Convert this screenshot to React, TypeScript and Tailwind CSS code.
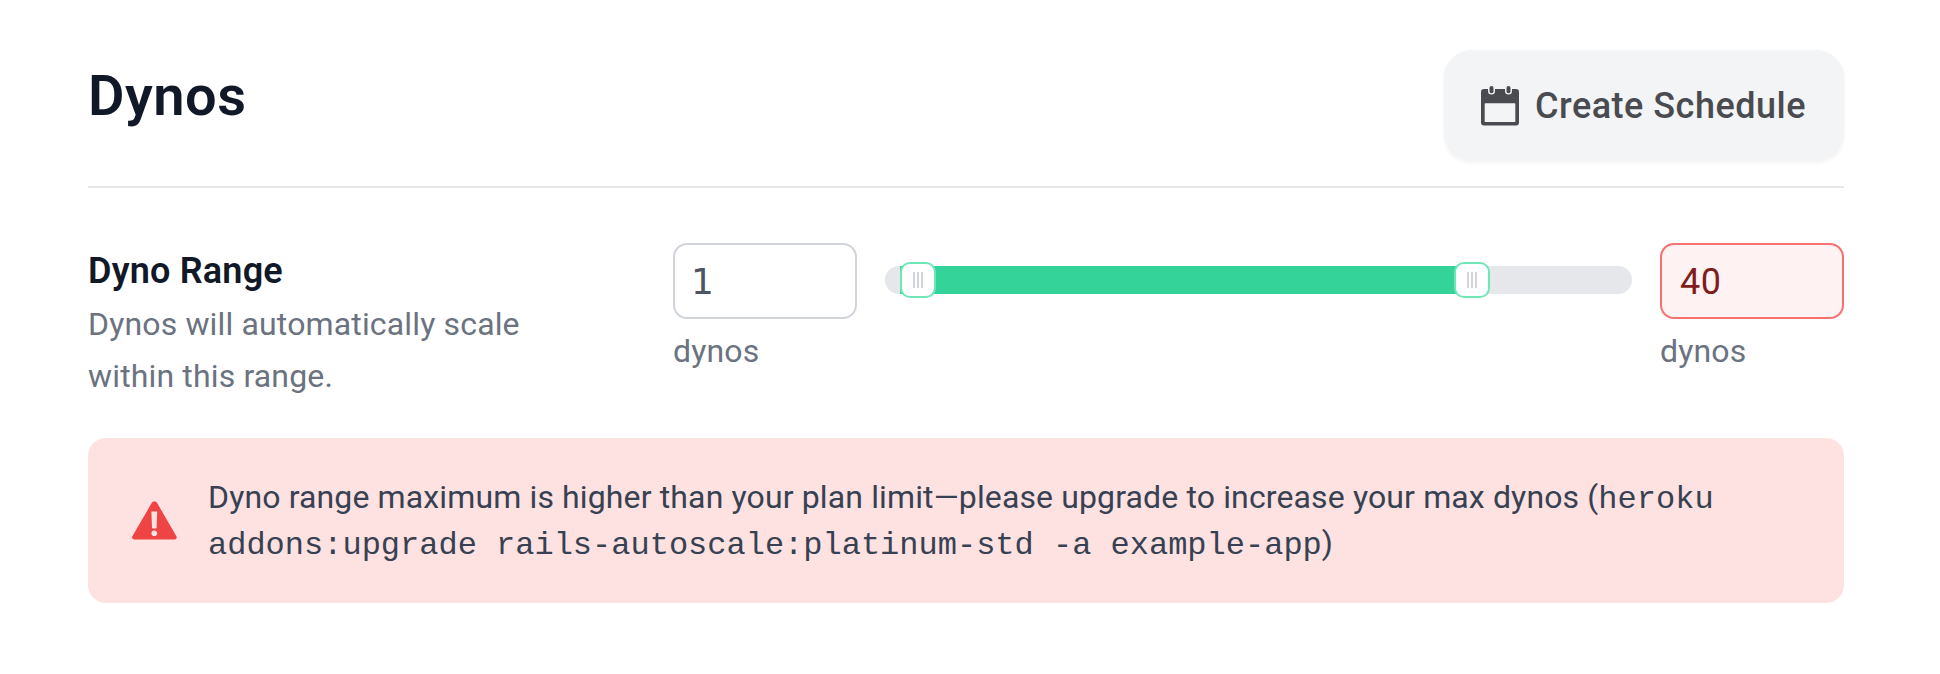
import { useState } from "react";
import clsx from "clsx";

interface DynoInputProps {
  value: string;
  onChange: (v: string) => void;
  invalid?: boolean;
}

function CalendarIcon(): React.JSX.Element {
  return (
    <svg width="38" height="40" viewBox="0 0 38 40" fill="currentColor" className="shrink-0">
      <path
        fillRule="evenodd"
        d="M3 3H7V5a3.5 3.5 0 0 0 7 0V3H24V5a3.5 3.5 0 0 0 7 0V3H35A3 3 0 0 1 38 6V36.5a3 3 0 0 1-3 3H3A3 3 0 0 1 0 36.5V6A3 3 0 0 1 3 3ZM4.3 17.3a.6.6 0 0 0-.6.6V35.4a.6.6 0 0 0 .6.6H33.7a.6.6 0 0 0 .6-.6V17.9a.6.6 0 0 0-.6-.6Z"
      />
      <rect x="8.5" y="0" width="4" height="7.3" rx="2" />
      <rect x="25.5" y="0" width="4" height="7.3" rx="2" />
    </svg>
  );
}

function WarningIcon(): React.JSX.Element {
  return (
    <svg width="45" height="39" viewBox="0 0 45 39" className="shrink-0 text-[#ef4444]">
      <path
        fill="currentColor"
        d="M19.8 1.8a2.9 2.9 0 0 1 5.2 0L44.4 35.2a2.2 2.2 0 0 1-1.9 3.3H2.3A2.2 2.2 0 0 1 .4 35.2Z"
      />
      <path fill="#fee2e2" d="M19.4 10.6h5.8l-.6 16a1 1 0 0 1-1 .9h-2.6a1 1 0 0 1-1-.9Z" />
      <circle cx="22.3" cy="32.2" r="2.8" fill="#fee2e2" />
    </svg>
  );
}

function DynoInput({ value, onChange, invalid }: DynoInputProps): React.JSX.Element {
  return (
    <label className="flex w-[184px] shrink-0 flex-col gap-[9px]">
      <input
        value={value}
        onChange={(e) => onChange(e.target.value)}
        className={clsx(
          "h-[76px] w-full rounded-[14px] border-2 pr-4 text-4xl outline-none",
          invalid
            ? "border-[#f87171] bg-[#fef2f2] pt-px pl-[18px] tracking-[0.5px] text-[#7f1d1d]"
            : "border-[#d1d5db] bg-white pl-4 font-['DejaVu_Sans',sans-serif] text-[#4b5563]"
        )}
      />
      <span className="text-[32px] leading-[46px] tracking-[0.15px] text-[#6b7280]">dynos</span>
    </label>
  );
}

function Handle({ position }: { position: number }): React.JSX.Element {
  return (
    <div
      className="absolute -top-1 flex size-9 items-center justify-center gap-0.5 rounded-[10px] border-2 border-[#6ee7b7] bg-white"
      style={{ left: position }}
    >
      <span className="h-4 w-0.5 bg-[#d1d5db]" />
      <span className="h-4 w-0.5 bg-[#d1d5db]" />
      <span className="h-4 w-0.5 bg-[#d1d5db]" />
    </div>
  );
}

export default function App(): React.JSX.Element {
  const [min, setMin] = useState("1");
  const [max, setMax] = useState("40");

  // handle offsets along the track, in px
  const from = 15;
  const to = 569;

  return (
    <div className="min-h-[674px] bg-white pt-[50px] pr-24 pl-[88px] font-['Roboto',sans-serif]">
      <header className="flex h-[138px] items-start justify-between border-b-2 border-[#e5e7eb]">
        <h1 className="mt-3.5 text-[56px] leading-[64px] font-semibold tracking-[0.5px] text-[#111827]">Dynos</h1>
        <button className="flex h-[111px] w-[400px] items-center gap-4 rounded-[28px] bg-[#f3f4f6] pl-[37px] text-4xl font-medium tracking-[0.5px] text-[#4a4b50] shadow-[0_2px_4px_rgba(0,0,0,0.05)]">
          <CalendarIcon />
          Create Schedule
        </button>
      </header>

      <section className="flex pt-[55px]">
        <div className="w-[585px] shrink-0 pt-px">
          <h2 className="text-4xl leading-[54px] font-semibold tracking-[0.2px] text-[#111827]">Dyno Range</h2>
          <p className="w-[480px] text-[32px] leading-[52px] tracking-[0.15px] text-[#6b7280]">
            Dynos will automatically scale within this range.
          </p>
        </div>
        <div className="flex flex-1 items-start gap-7">
          <DynoInput value={min} onChange={setMin} />
          <div className="relative mt-[23px] h-7 flex-1 rounded-full bg-[#e5e7eb]">
            <div className="absolute inset-y-0 bg-[#34d399]" style={{ left: from, width: to - from + 18 }} />
            <Handle position={from} />
            <Handle position={to} />
          </div>
          <DynoInput value={max} onChange={setMax} invalid />
        </div>
      </section>

      <div className="mt-9 flex h-[165px] items-center gap-[31px] rounded-[18px] bg-[#fee2e2] pr-9 pb-px pl-11">
        <WarningIcon />
        <p className="text-[32px] leading-[46px] tracking-[0.13px] text-[#374151]">
          Dyno range maximum is higher than your plan limit—please upgrade to increase your max dynos (
          <code className="font-['Liberation_Mono',monospace] leading-none tracking-normal">
            heroku addons:upgrade rails-autoscale:platinum-std -a example-app
          </code>
          )
        </p>
      </div>
    </div>
  );
}
